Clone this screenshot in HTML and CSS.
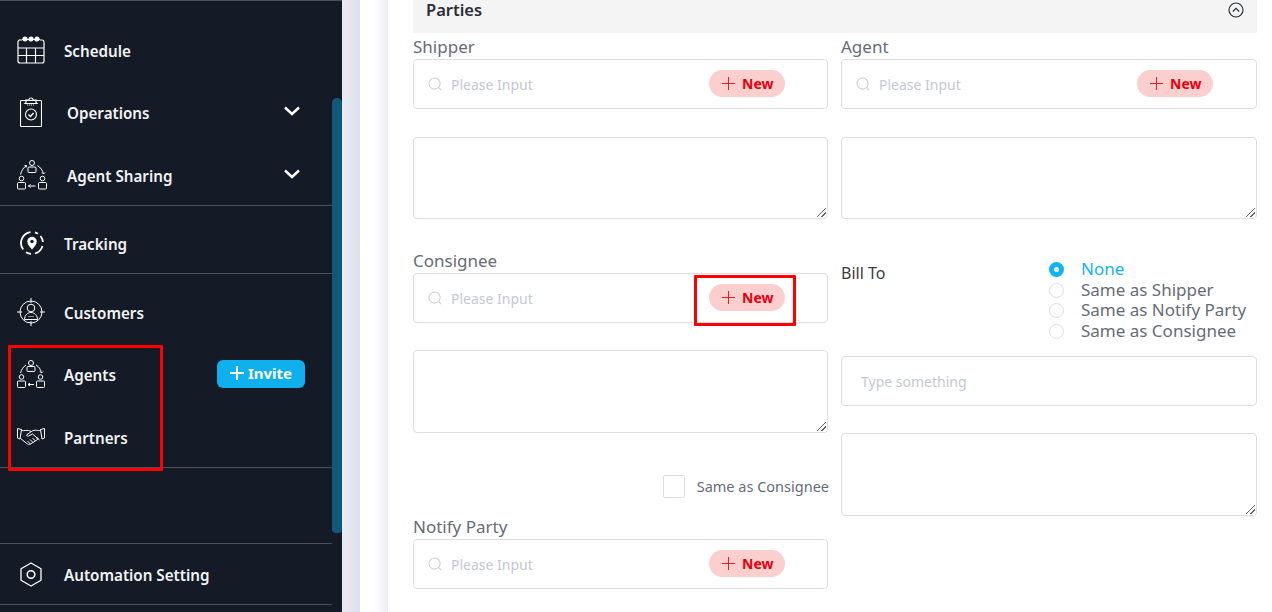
FILE: index.html
```html
<!DOCTYPE html>
<html lang="en">
<head>
    <meta charset="UTF-8">
    <title>Parties</title>
    <link rel="stylesheet" href="styles.css">
</head>
<body>
    <aside class="sidebar">
        <div class="nav-group first">
            <div class="nav-item schedule">
                <svg class="icon" width="28" height="28" viewBox="0 0 28 28" fill="none" stroke="#fff" stroke-width="1.2"><path d="M5 4H3.500A2 2 0 0 0 1 6v19a2 2 0 0 0 2 2h22a2 2 0 0 0 2-2V6a2 2 0 0 0-2-2H23M1 12h26M1 19.500h26M9.500 12v15M18.500 12v15M5 3.500h18"/><circle cx="8" cy="3" r="2" fill="#fff"/><circle cx="14" cy="3" r="2" fill="#fff"/><circle cx="20" cy="3" r="2" fill="#fff"/></svg>
                <span>Schedule</span>
            </div>
            <div class="nav-item wide operations">
                <svg class="icon" width="22" height="30" viewBox="0 0 22 30" fill="none" stroke="#fff" stroke-width="1.100"><rect x=".5" y="3.500" width="21" height="26" rx="1"/><path d="M6 5.500V3h3a2 2 0 0 1 4 0h3v2.500l1 1H5z"/><path d="M7 8h8" stroke-dasharray="1 1"/><circle cx="11" cy="17.500" r="5.500"/><path d="M8.500 17.500l2 2 3-3.500" stroke-width="1.400"/></svg>
                <span>Operations</span>
                <svg class="chevron" width="16" height="10" viewBox="0 0 16 10" fill="none" stroke="#fff" stroke-width="2.400"><path d="M1 1.500l7 6.500 7-6.500"/></svg>
            </div>
            <div class="nav-item wide sharing">
                <svg class="icon" width="30" height="30" viewBox="0 0 30 30" fill="none" stroke="#fff" stroke-width="1"><circle cx="15" cy="3" r="2.500"/><rect x="11" y="7" width="8" height="5.500" rx="1"/><circle cx="4.500" cy="18.500" r="2.300"/><rect x=".5" y="22.500" width="8" height="6.500" rx="1"/><circle cx="25.500" cy="18.500" r="2.300"/><rect x="21.500" y="22.500" width="8" height="6.500" rx="1"/><path d="M3.500 14.500C4.500 10.500 6.500 7.500 9.500 5.500M20.500 5.500c3 2 5 4.500 6 8.500M18.500 26h-7M11.500 26l2-1.500M11.500 26l2 1.500M26.500 14L25 12.500M26.500 14l1.500-1.500M9.500 5.500L7.500 5.500M9.500 5.500L9 7.500"/></svg>
                <span>Agent Sharing</span>
                <svg class="chevron" width="16" height="10" viewBox="0 0 16 10" fill="none" stroke="#fff" stroke-width="2.400"><path d="M1 1.500l7 6.500 7-6.500"/></svg>
            </div>
        </div>
        <div class="nav-group tracking-group">
            <div class="nav-item tracking">
                <svg class="icon" width="24" height="24" viewBox="0 0 24 24" fill="none" stroke="#fff" stroke-width="1.800"><path d="M10.500 1.100A11 11 0 0 0 3.200 18.500M6 21.300a11 11 0 0 0 5 1.600M15 22.500a11 11 0 0 0 7.500-7.500M22.900 11a11 11 0 0 0-2.400-6M18 2.800a11 11 0 0 0-3-1.400"/><path d="M12 18.500c-3-3.500-4.700-5.500-4.700-8a4.700 4.700 0 0 1 9.400 0c0 2.500-1.700 4.500-4.700 8z" fill="#fff" stroke="none"/><circle cx="12" cy="10.500" r="1.700" fill="#141b27" stroke="none"/></svg>
                <span>Tracking</span>
            </div>
        </div>
        <div class="nav-group people">
            <div class="nav-item customers">
                <svg class="icon" width="28" height="28" viewBox="0 0 28 28" fill="none" stroke="#fff" stroke-width="1"><circle cx="14" cy="14" r="11"/><path d="M14 0v5M14 23v5M0 14h5M23 14h5"/><circle cx="14" cy="10" r="3.800"/><path d="M7.500 21.500c0-4 3-7 6.500-7s6.500 3 6.500 7z"/><path d="M11.500 18.500h5" stroke-dasharray="1 1"/></svg>
                <span>Customers</span>
            </div>
            <div class="nav-item agents">
                <svg class="icon" width="28" height="28" viewBox="0 0 28 28" fill="none" stroke="#fff" stroke-width="1"><circle cx="14" cy="3" r="2.500"/><rect x="10" y="6.500" width="8" height="5" rx="1"/><circle cx="4.500" cy="17" r="2.300"/><rect x=".5" y="21" width="8" height="6.500" rx="1"/><circle cx="23.500" cy="17" r="2.300"/><rect x="19.500" y="21" width="8" height="6.500" rx="1"/><path d="M3.500 13C4.500 9.500 6.500 6.500 9 5M19 5c3 1.500 4.500 4.500 5.500 8M17 24.500h-6M11 24.500l2-1.500M11 24.500l2 1.500M24.500 13L23 11.500M24.500 13l1.500-1.500"/></svg>
                <span>Agents</span>
                <button class="invite"><svg width="14" height="14" viewBox="0 0 14 14" stroke="#fff" stroke-width="2"><path d="M7 0v14M0 7h14"/></svg>Invite</button>
            </div>
            <div class="nav-item partners">
                <svg class="icon" width="28" height="18" viewBox="0 0 28 18" fill="none" stroke="#fff" stroke-width="1"><path d="M.5.500l4 1L3 11 .5 10zM27.500.500l-4 1L25 11l2.500-1zM4.500 2.500c3 .5 5-.5 7 0l3 1-4.500 3c-1 1 0 2 1.500 1.500l4-2 7 6M23.500 2.500c-3 .5-5.500-1.500-9 1M3.500 10.500l7 5.500c1.500 1 2.500.5 3 0l7-4.500c1-1 0-2.500-1.500-1.500M10.500 13l3 3M13 11.500l3 3M15.500 10l3 3"/></svg>
                <span>Partners</span>
            </div>
        </div>
        <div class="nav-group automation">
            <div class="nav-item">
                <svg class="icon" width="22" height="25" viewBox="0 0 22 25" fill="none" stroke="#fff" stroke-width="1.300"><path d="M11 1l10 5.700v11.600L11 24 1 18.300V6.700z" stroke-linejoin="round"/><circle cx="11" cy="12.500" r="3.800" stroke-width="1.500"/></svg>
                <span>Automation Setting</span>
            </div>
        </div>
        <div class="scroll-thumb"></div>
        <div class="mark mark-nav"></div>
    </aside>

    <main class="content">
        <div class="panel">
            <section class="card">
                <header class="card-head">
                    <h2>Parties</h2>
                    <svg width="16" height="16" viewBox="0 0 16 16" fill="none" stroke="#2b2f36" stroke-width="1.200"><circle cx="8" cy="8" r="7"/><path d="M4.800 9.500L8 6.300l3.200 3.200"/></svg>
                </header>
                <div class="columns">
                    <div class="col">
                        <label class="field-label">Shipper</label>
                        <div class="lookup">
                            <svg class="search" width="14" height="14" viewBox="0 0 15 15" fill="none" stroke="#c9ccd4" stroke-width="1.100"><circle cx="7" cy="7" r="6"/><path d="M11.500 11.500l2.500 2.500"/></svg>
                            <span class="placeholder">Please Input</span>
                            <span class="new"><svg width="13" height="13" viewBox="0 0 13 13" stroke="#ef1c1c" stroke-width="1"><path d="M6.500 0v13M0 6.500h13"/></svg>New</span>
                        </div>
                        <div class="area"><i class="grip"></i></div>

                        <label class="field-label consignee-label">Consignee</label>
                        <div class="lookup">
                            <svg class="search" width="14" height="14" viewBox="0 0 15 15" fill="none" stroke="#c9ccd4" stroke-width="1.100"><circle cx="7" cy="7" r="6"/><path d="M11.500 11.500l2.500 2.500"/></svg>
                            <span class="placeholder">Please Input</span>
                            <span class="new"><svg width="13" height="13" viewBox="0 0 13 13" stroke="#ef1c1c" stroke-width="1"><path d="M6.500 0v13M0 6.500h13"/></svg>New</span>
                            <div class="mark mark-new"></div>
                        </div>
                        <div class="area consignee-area"><i class="grip"></i></div>

                        <div class="same-as">
                            <span class="checkbox"></span>
                            <span>Same as Consignee</span>
                        </div>

                        <label class="field-label notify-label">Notify Party</label>
                        <div class="lookup">
                            <svg class="search" width="14" height="14" viewBox="0 0 15 15" fill="none" stroke="#c9ccd4" stroke-width="1.100"><circle cx="7" cy="7" r="6"/><path d="M11.500 11.500l2.500 2.500"/></svg>
                            <span class="placeholder">Please Input</span>
                            <span class="new"><svg width="13" height="13" viewBox="0 0 13 13" stroke="#ef1c1c" stroke-width="1"><path d="M6.500 0v13M0 6.500h13"/></svg>New</span>
                        </div>
                    </div>
                    <div class="col">
                        <label class="field-label">Agent</label>
                        <div class="lookup">
                            <svg class="search" width="14" height="14" viewBox="0 0 15 15" fill="none" stroke="#c9ccd4" stroke-width="1.100"><circle cx="7" cy="7" r="6"/><path d="M11.500 11.500l2.500 2.500"/></svg>
                            <span class="placeholder">Please Input</span>
                            <span class="new"><svg width="13" height="13" viewBox="0 0 13 13" stroke="#ef1c1c" stroke-width="1"><path d="M6.500 0v13M0 6.500h13"/></svg>New</span>
                        </div>
                        <div class="area"><i class="grip"></i></div>

                        <div class="bill-to">
                            <span class="bill-label">Bill To</span>
                            <div class="radios">
                                <div class="radio active"><i></i>None</div>
                                <div class="radio"><i></i>Same as Shipper</div>
                                <div class="radio"><i></i>Same as Notify Party</div>
                                <div class="radio"><i></i>Same as Consignee</div>
                            </div>
                        </div>
                        <div class="text-input">Type something</div>
                        <div class="area bill-area"><i class="grip"></i></div>
                    </div>
                </div>
            </section>
        </div>
    </main>
</body>
</html>
```

FILE: styles.css
```css
* {
    box-sizing: border-box;
}
body {
    margin: 0;
    display: flex;
    height: 612px;
    overflow: hidden;
    font-family: "Noto Sans", "Open Sans", sans-serif;
}

/* sidebar */
.sidebar {
    position: relative;
    width: 342px;
    flex-shrink: 0;
    background: #141b27;
    border-top: 1px solid #4a4f59;
    color: #f2f3f5;
}
.nav-group {
    width: 332px;
    border-bottom: 1px solid #4a4f59;
}
.first {
    height: 205px;
    padding-top: 18.5px;
}
.tracking-group {
    height: 68px;
    padding-top: 23px;
}
.people {
    height: 194px;
    padding-top: 8px;
}
.automation {
    height: 62px;
    margin-top: 75px;
    border-top: 1px solid #4a4f59;
    padding-top: 16px;
}
.nav-item {
    display: grid;
    grid-template-columns: 47px 1fr auto;
    align-items: center;
    height: 62.5px;
    padding-left: 17px;
    font-size: 15.2px;
    font-weight: 600;
}
.nav-item.wide {
    grid-template-columns: 50px 1fr auto;
}
.tracking-group .nav-item,
.automation .nav-item {
    height: 30px;
}
.people .nav-item {
    height: 62px;
}
.people .partners {
    margin-top: 1px;
}
.nav-item .icon {
    margin-top: -2px;
}
.operations .icon,
.tracking .icon,
.automation .icon {
    margin-left: 3px;
}
.nav-item span {
    white-space: nowrap;
}
.chevron {
    margin-right: 32px;
    margin-top: -4px;
}
.invite {
    display: flex;
    align-items: center;
    gap: 4px;
    height: 28px;
    margin-right: 27px;
    margin-top: -3px;
    padding: 0 13px 2px;
    border: 0;
    border-radius: 6px;
    background: #0fb0ee;
    color: #fff;
    font-family: inherit;
    font-size: 15px;
    font-weight: 700;
}
.scroll-thumb {
    position: absolute;
    left: 332px;
    top: 97px;
    width: 10px;
    height: 435px;
    border-radius: 5px 5px 4px 4px;
    background: #0f5a7c;
}
.mark {
    position: absolute;
    border: 3px solid #ff0000;
    border-radius: 1px;
    pointer-events: none;
}
.mark-nav {
    left: 8px;
    top: 344px;
    width: 155px;
    height: 126px;
}

/* content */
.content {
    flex: 1;
    min-width: 0;
    padding-left: 18px;
    background: linear-gradient(90deg, #eaebf3, #dedfeb 18px);
}
.panel {
    height: 612px;
    padding-left: 28px;
    background: linear-gradient(90deg, #fff 14px, #eeeef3 28px);
}
.card {
    height: 612px;
    padding-left: 25px;
    padding-right: 15px;
    background: #fff;
}
.card-head {
    display: flex;
    align-items: flex-start;
    justify-content: space-between;
    height: 33px;
    padding: 0 13px;
    background: #f4f4f4;
}
.card-head svg {
    margin-top: 2px;
}
h2 {
    margin: 0;
    font-size: 16.5px;
    line-height: 19px;
    font-weight: 600;
    color: #2b2f36;
}
.columns {
    display: grid;
    grid-template-columns: 415px 416px;
    gap: 13px;
}
.field-label {
    display: block;
    height: 26px;
    font-size: 17px;
    line-height: 27px;
    color: #666c78;
}
.lookup {
    position: relative;
    display: flex;
    align-items: center;
    height: 50px;
    padding-left: 14px;
    border: 1px solid #dcdde6;
    border-radius: 4px;
    background: #fff;
}
.search {
    margin-right: 9px;
}
.placeholder {
    font-size: 14px;
    color: #c5c8d2;
}
.new {
    position: absolute;
    left: 295px;
    top: 10px;
    display: flex;
    align-items: center;
    gap: 7px;
    width: 76px;
    height: 27px;
    padding-left: 13px;
    border-radius: 14px;
    background: #fccfcf;
    color: #e8000d;
    font-size: 14px;
    font-weight: 700;
}
.mark-new {
    left: 280px;
    top: 1px;
    width: 102px;
    height: 51px;
}
.area {
    position: relative;
    height: 82px;
    margin-top: 28px;
    border: 1px solid #dcdde6;
    border-radius: 4px;
    background: #fff;
}
.grip {
    position: absolute;
    right: 1px;
    bottom: 1px;
    width: 9px;
    height: 9px;
    background: linear-gradient(135deg, transparent 45%, #666 45%, #666 55%, transparent 55%, transparent 72%, #666 72%, #666 82%, transparent 82%);
}
.consignee-label {
    margin-top: 28px;
}
.consignee-area {
    height: 83px;
    margin-top: 27px;
}
.same-as {
    display: flex;
    align-items: center;
    justify-content: flex-end;
    gap: 12px;
    height: 24px;
    margin-top: 41px;
    margin-right: -1px;
    font-size: 14.5px;
    color: #666c78;
}
.checkbox {
    width: 22px;
    height: 23px;
    border: 1px solid #dcdde6;
    border-radius: 2px;
}
.notify-label {
    margin-top: 15px;
}
.bill-to {
    display: flex;
    height: 97px;
    margin-top: 40px;
}
.bill-label {
    width: 208px;
    padding-top: 3px;
    font-size: 16px;
    line-height: 22px;
    color: #3a3d43;
}
.radios {
    margin-top: -1px;
}
.radio {
    display: flex;
    align-items: center;
    height: 20.7px;
    font-size: 17px;
    color: #666c78;
}
.radio i {
    width: 15px;
    height: 15px;
    margin-top: 2px;
    margin-right: 17px;
    border: 1px solid #dcdde6;
    border-radius: 50%;
    background: #fff;
}
.radio.active {
    color: #0fb4f5;
}
.radio.active i {
    border: 5px solid #0fb4f5;
}
.text-input {
    display: flex;
    align-items: center;
    height: 50px;
    padding-left: 19px;
    border: 1px solid #dcdde6;
    border-radius: 4px;
    font-size: 14px;
    color: #c5c8d2;
}
.bill-area {
    height: 83px;
    margin-top: 27px;
}
```
